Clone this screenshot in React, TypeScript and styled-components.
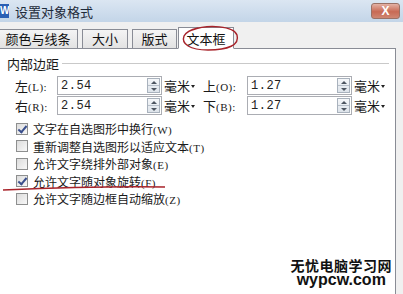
import React from 'react'
import styled, { createGlobalStyle } from 'styled-components'

const GlobalStyle = createGlobalStyle`
  html, body {
    margin: 0;
    padding: 0;
    width: 403px;
    height: 294px;
    overflow: hidden;
    background: #f0f0f0;
  }
  body {
    font-family: 'Noto Sans CJK SC', 'Liberation Sans', sans-serif;
    color: #1a1a1a;
  }
`

const Window = styled.div`
  position: relative;
  display: flex;
  flex-direction: column;
  width: 403px;
  height: 294px;
  background: #f0f0f0;
  overflow: hidden;
`

const TitleBar = styled.div`
  display: flex;
  align-items: center;
  height: 22px;
  padding-right: 3px;
  background: linear-gradient(#dbe6f2, #c3d5e8);
`

const AppIcon = styled.div`
  width: 9px;
  height: 14px;
  background: #2a5fb4;
  color: #fff;
  font: bold 10px 'Liberation Sans', sans-serif;
  line-height: 14px;
  text-align: right;
  overflow: hidden;
`

const Title = styled.div`
  margin-left: 6px;
  flex: 1;
  font-size: 13px;
  color: #1e2a3a;
`

const CloseButton = styled.div`
  width: 27px;
  height: 14px;
  border-radius: 3px;
  border: 1px solid #9a7166;
  background: linear-gradient(#e3b1a4, #c86a55 55%, #cf8672);
  color: #fff;
  font: bold 12px 'Liberation Sans', sans-serif;
  line-height: 14px;
  text-align: center;
`

const TabStrip = styled.div`
  display: flex;
  align-items: flex-end;
  height: 26px;
  gap: 4px;
  margin-left: -2px;
`

const Tab = styled.div<{ active?: boolean; width: number }>`
  width: ${(p) => p.width}px;
  box-sizing: border-box;
  height: ${(p) => (p.active ? 22 : 19)}px;
  margin-left: ${(p) => (p.active ? -3 : 0)}px;
  border: 1px solid #898c95;
  border-bottom: ${(p) => (p.active ? '1px solid #fff' : '0')};
  margin-bottom: ${(p) => (p.active ? -1 : 0)}px;
  background: ${(p) => (p.active ? '#fff' : 'linear-gradient(#f4f4f4, #e2e2e2)')};
  font-size: 13px;
  line-height: ${(p) => (p.active ? 21 : 18)}px;
  text-align: center;
  color: #111;
  z-index: ${(p) => (p.active ? 1 : 0)};
`

const Panel = styled.div`
  flex: 1;
  margin-right: 7px;
  background: #fff;
  border-top: 1px solid #898c95;
  border-right: 1px solid #898c95;
  padding: 4px 0 0 7px;
  display: flex;
  flex-direction: column;
`

const GroupHeader = styled.div`
  display: flex;
  align-items: center;
  gap: 3px;
  height: 20px;
  margin-right: 6px;
  font-size: 13px;
`

const GroupLine = styled.div`
  flex: 1;
  height: 1px;
  background: #c9c9c9;
`

const FieldGrid = styled.div`
  display: grid;
  grid-template-columns: 42px 105px 41px 44px 105px 34px;
  row-gap: 1px;
  align-items: center;
  margin: 3px 0 0 8px;
`

const Label = styled.div`
  font-size: 13px;
  white-space: nowrap;
`

const Key = styled.span`
  font-family: 'Liberation Serif', serif;
  font-size: 11px;
  letter-spacing: 0.5px;
`

const Input = styled.div`
  display: flex;
  align-items: center;
  height: 19px;
  border: 1px solid #abadb3;
  box-sizing: border-box;
  background: #fff;
`

const InputValue = styled.div`
  flex: 1;
  padding-left: 3px;
  font-family: 'Liberation Mono', monospace;
  font-size: 12px;
  letter-spacing: 0.5px;
  color: #222;
`

const Spinner = styled.div`
  display: flex;
  flex-direction: column;
  width: 13px;
  height: 15px;
  margin-right: 1px;
  border: 1px solid #a9b2bd;
  box-sizing: border-box;
  background: linear-gradient(#f5f7f9, #dde3ea);
`

const SpinHalf = styled.div<{ down?: boolean }>`
  flex: 1;
  display: flex;
  align-items: center;
  justify-content: center;
  border-top: ${(p) => (p.down ? '1px solid #b8c0ca' : '0')};
  &::after {
    content: '';
    border-left: 3px solid transparent;
    border-right: 3px solid transparent;
    ${(p) => (p.down ? 'border-top: 3px solid #4d5560;' : 'border-bottom: 3px solid #4d5560;')}
  }
`

const Unit = styled.div`
  display: flex;
  align-items: center;
  gap: 1px;
  padding-left: 2px;
  font-size: 13px;
  white-space: nowrap;
  &::after {
    content: '';
    border-left: 2.5px solid transparent;
    border-right: 2.5px solid transparent;
    border-top: 3px solid #222;
    margin-top: 2px;
  }
`

const CheckList = styled.div`
  display: flex;
  flex-direction: column;
  margin: 5px 0 0 9px;
`

const CheckRow = styled.div`
  display: flex;
  align-items: center;
  gap: 5px;
  height: 17.5px;
  font-size: 12px;
`

const Box = styled.div<{ checked?: boolean }>`
  position: relative;
  width: 12px;
  height: 12px;
  box-sizing: border-box;
  border: 1px solid #8e8f8f;
  background: linear-gradient(135deg, #dcdcdc, #f8f8f8);
  &::after {
    content: '';
    display: ${(p) => (p.checked ? 'block' : 'none')};
    position: absolute;
    left: 3px;
    top: 0px;
    width: 3px;
    height: 7px;
    border: solid #3a4f8c;
    border-width: 0 2px 2px 0;
    transform: rotate(40deg);
  }
`

const Annotation = styled.svg`
  position: absolute;
  left: 0;
  top: 0;
  z-index: 5;
  pointer-events: none;
`

const Watermark = styled.div`
  position: absolute;
  right: 11px;
  bottom: 7px;
  display: flex;
  flex-direction: column;
  align-items: center;
  font-weight: bold;
  color: #111;
`

const WatermarkTitle = styled.div`
  font-size: 14px;
  line-height: 15px;
  letter-spacing: 0.5px;
`

const WatermarkSite = styled.div`
  font-family: 'Liberation Sans', sans-serif;
  font-size: 16px;
  line-height: 14px;
`

type Field = { label: string; key: string; value: string }

const rows: Array<[Field, Field]> = [
  [
    { label: '左', key: '(L):', value: '2.54' },
    { label: '上', key: '(O):', value: '1.27' },
  ],
  [
    { label: '右', key: '(R):', value: '2.54' },
    { label: '下', key: '(B):', value: '1.27' },
  ],
]

const tabs = [
  { label: '颜色与线条', width: 80 },
  { label: '大小', width: 46 },
  { label: '版式', width: 45 },
  { label: '文本框', width: 56, active: true },
]

const options = [
  { text: '文字在自选图形中换行', key: '(W)', checked: true },
  { text: '重新调整自选图形以适应文本', key: '(T)', checked: false },
  { text: '允许文字绕排外部对象', key: '(E)', checked: false },
  { text: '允许文字随对象旋转', key: '(F)', checked: true },
  { text: '允许文字随边框自动缩放', key: '(Z)', checked: false },
]

const Spin = () => (
  <Spinner>
    <SpinHalf />
    <SpinHalf down />
  </Spinner>
)

const MarginField: React.FC<{ field: Field }> = ({ field }) => (
  <>
    <Label>
      {field.label}
      <Key>{field.key}</Key>
    </Label>
    <Input>
      <InputValue>{field.value}</InputValue>
      <Spin />
    </Input>
    <Unit>毫米</Unit>
  </>
)

export default function App() {
  return (
    <Window>
      <GlobalStyle />
      <TitleBar>
        <AppIcon>W</AppIcon>
        <Title>设置对象格式</Title>
        <CloseButton>X</CloseButton>
      </TitleBar>
      <TabStrip>
        {tabs.map((t) => (
          <Tab key={t.label} active={t.active} width={t.width}>
            {t.label}
          </Tab>
        ))}
      </TabStrip>
      <Panel>
        <GroupHeader>
          内部边距
          <GroupLine />
        </GroupHeader>
        <FieldGrid>
          {rows.map(([left, right]) => (
            <React.Fragment key={left.key}>
              <MarginField field={left} />
              <MarginField field={right} />
            </React.Fragment>
          ))}
        </FieldGrid>
        <CheckList>
          {options.map((o) => (
            <CheckRow key={o.key}>
              <Box checked={o.checked} />
              <span>
                {o.text}
                <Key>{o.key}</Key>
              </span>
            </CheckRow>
          ))}
        </CheckList>
      </Panel>
      <Watermark>
        <WatermarkTitle>无忧电脑学习网</WatermarkTitle>
        <WatermarkSite>wypcw.com</WatermarkSite>
      </Watermark>
      <Annotation width="403" height="294" viewBox="0 0 403 294">
        <path
          d="M192 30 C 208 24, 234 26, 237 35 C 240 45, 228 50, 208 50 C 190 50, 181 44, 184 36 C 186 32, 190 30, 198 28"
          fill="none"
          stroke="#a8232a"
          strokeWidth="1.4"
        />
        <path d="M3 190 C 50 188, 110 186, 165 187" fill="none" stroke="#a8232a" strokeWidth="1.6" />
      </Annotation>
    </Window>
  )
}
